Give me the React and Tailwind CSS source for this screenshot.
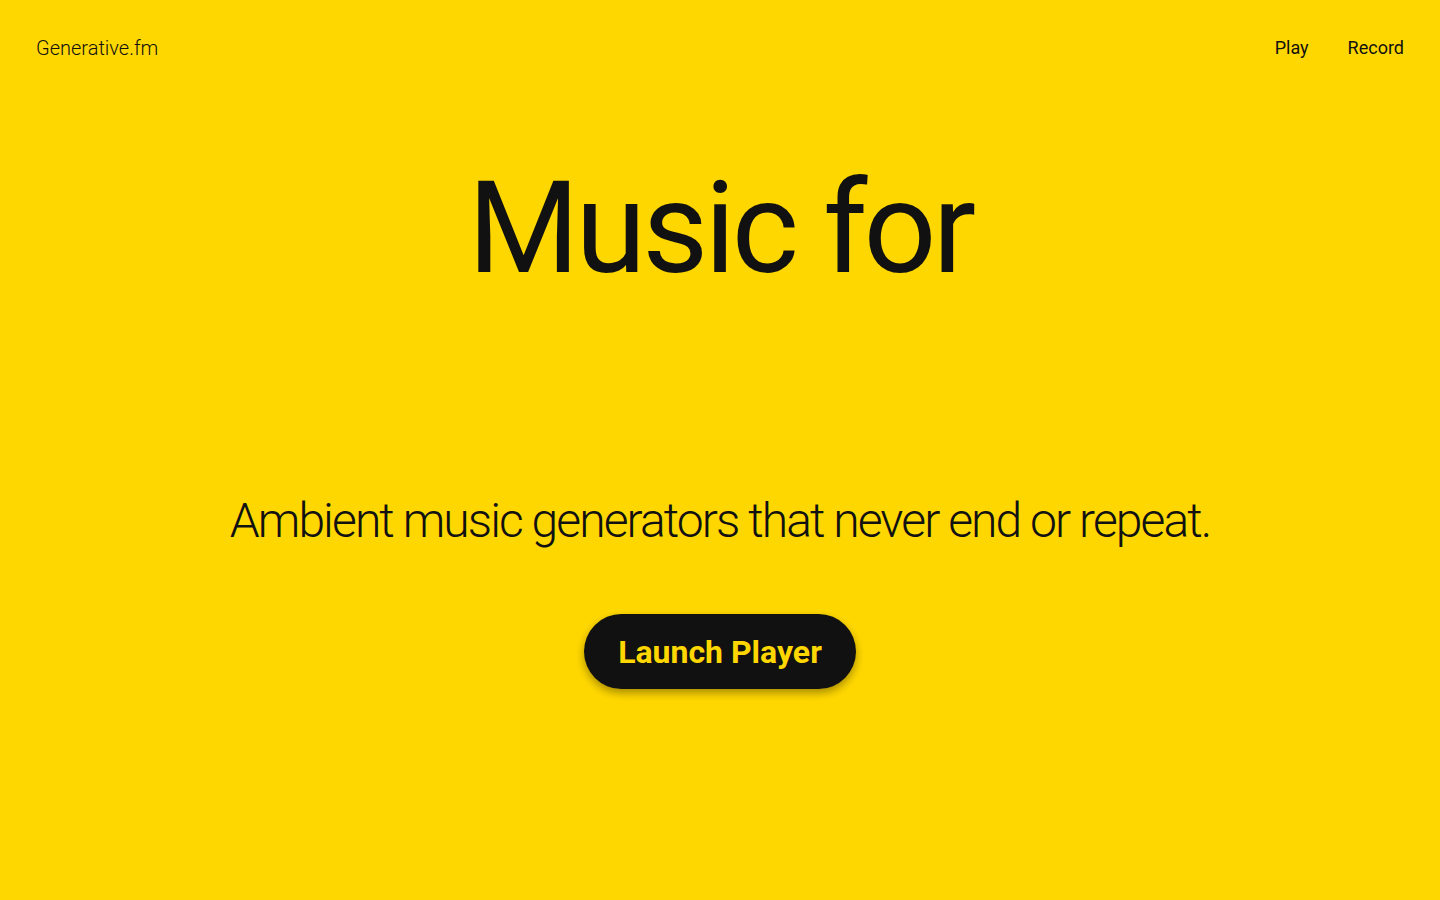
export default function App() {
  return (
    <div className="min-h-screen bg-[#ffd700] text-[#111] font-['Roboto',sans-serif] flex flex-col">
      <header className="flex items-center justify-between px-9 pt-[34px]">
        <a href="#" className="text-[20px] font-light leading-[28px]">Generative.fm</a>
        <nav className="flex gap-[39px] text-[18px] leading-[28px]">
          <a href="#">Play</a>
          <a href="#">Record</a>
        </nav>
      </header>

      <main className="flex flex-col items-center">
        <h1 className="mt-[91px] text-[128px] leading-[150px] font-normal tracking-[-0.03em] h-[300px] text-center">
          Music for
        </h1>
        <p className="mt-[36px] text-[48px] font-light tracking-[-0.04em] leading-[64px] text-center">
          Ambient music generators that never end or repeat.
        </p>
        <button className="mt-[61px] w-[272px] h-[75px] rounded-full bg-[#111] text-[#ffd700] text-[32px] font-bold shadow-[0_4px_8px_rgba(0,0,0,0.35)]">
          Launch Player
        </button>
      </main>
    </div>
  );
}
